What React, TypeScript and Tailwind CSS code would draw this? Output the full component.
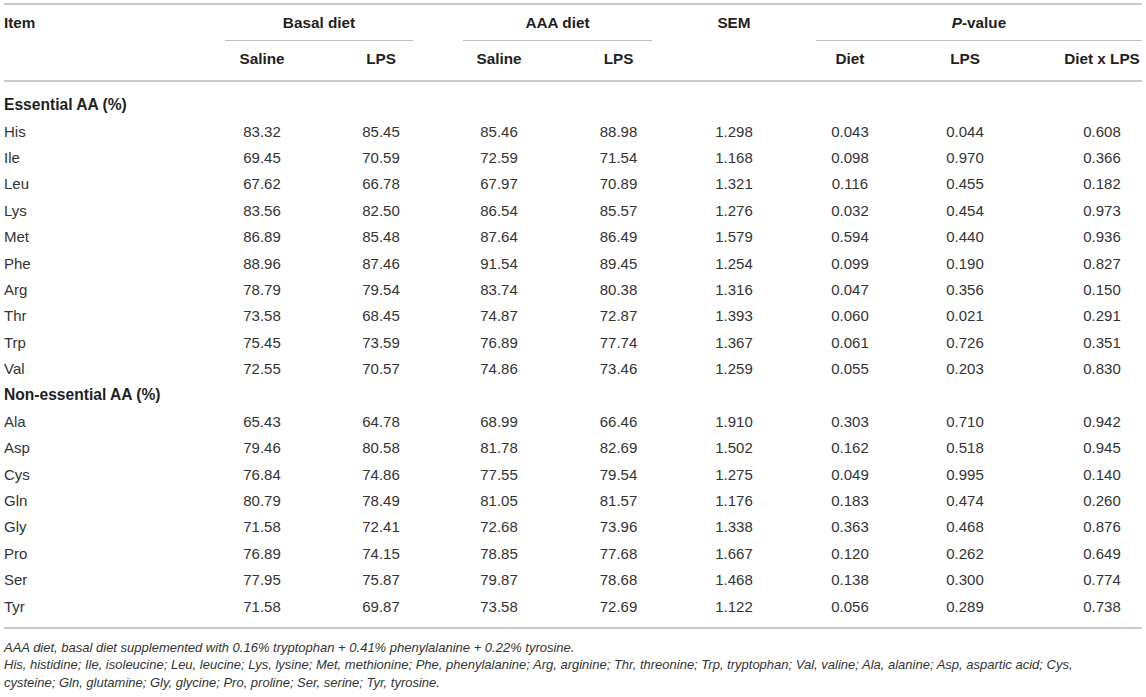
const essential = [
  ["His", "83.32", "85.45", "85.46", "88.98", "1.298", "0.043", "0.044", "0.608"],
  ["Ile", "69.45", "70.59", "72.59", "71.54", "1.168", "0.098", "0.970", "0.366"],
  ["Leu", "67.62", "66.78", "67.97", "70.89", "1.321", "0.116", "0.455", "0.182"],
  ["Lys", "83.56", "82.50", "86.54", "85.57", "1.276", "0.032", "0.454", "0.973"],
  ["Met", "86.89", "85.48", "87.64", "86.49", "1.579", "0.594", "0.440", "0.936"],
  ["Phe", "88.96", "87.46", "91.54", "89.45", "1.254", "0.099", "0.190", "0.827"],
  ["Arg", "78.79", "79.54", "83.74", "80.38", "1.316", "0.047", "0.356", "0.150"],
  ["Thr", "73.58", "68.45", "74.87", "72.87", "1.393", "0.060", "0.021", "0.291"],
  ["Trp", "75.45", "73.59", "76.89", "77.74", "1.367", "0.061", "0.726", "0.351"],
  ["Val", "72.55", "70.57", "74.86", "73.46", "1.259", "0.055", "0.203", "0.830"],
];

const nonEssential = [
  ["Ala", "65.43", "64.78", "68.99", "66.46", "1.910", "0.303", "0.710", "0.942"],
  ["Asp", "79.46", "80.58", "81.78", "82.69", "1.502", "0.162", "0.518", "0.945"],
  ["Cys", "76.84", "74.86", "77.55", "79.54", "1.275", "0.049", "0.995", "0.140"],
  ["Gln", "80.79", "78.49", "81.05", "81.57", "1.176", "0.183", "0.474", "0.260"],
  ["Gly", "71.58", "72.41", "72.68", "73.96", "1.338", "0.363", "0.468", "0.876"],
  ["Pro", "76.89", "74.15", "78.85", "77.68", "1.667", "0.120", "0.262", "0.649"],
  ["Ser", "77.95", "75.87", "79.87", "78.68", "1.468", "0.138", "0.300", "0.774"],
  ["Tyr", "71.58", "69.87", "73.58", "72.69", "1.122", "0.056", "0.289", "0.738"],
];

const cols = "grid grid-cols-[196px_124px_114px_122px_117px_114px_118px_112px_121px]";

function DataRow({ row }: { row: string[] }) {
  return (
    <div className={`${cols} h-[26.4px] items-center`}>
      {row.map((v, i) => (
        <div
          key={i}
          className={i === 0 ? "text-left" : i === 8 ? "text-center pl-[41px]" : "text-center"}
        >
          {v}
        </div>
      ))}
    </div>
  );
}

function Section({ title }: { title: string }) {
  return (
    <div className="h-[26.4px] flex items-center font-bold text-[15.6px] text-[#1f1f1f]">{title}</div>
  );
}

export default function App() {
  return (
    <div
      className="w-[1146px] h-[697px] bg-white overflow-hidden pt-[3px] px-[4px] text-[15px] leading-[18px] text-[#333]"
      style={{ fontFamily: '"Liberation Sans", Arial, sans-serif' }}
    >
      <div className="w-[1138px]">
        <div className="h-[2px] bg-[#c9c9c9]" />

        {/* header row 1 */}
        <div className={`${cols} h-[36px] font-bold text-[15.3px] text-[#1f1f1f]`}>
          <div className="pt-[9px]">Item</div>
          <div className="col-span-2 px-[25px]">
            <div className="h-full pt-[9px] text-center border-b border-[#bdbdbd]">Basal diet</div>
          </div>
          <div className="col-span-2 px-[25px]">
            <div className="h-full pt-[9px] text-center border-b border-[#bdbdbd]">AAA diet</div>
          </div>
          <div className="pt-[9px] text-center">SEM</div>
          <div className="col-span-3 pl-[25px]">
            <div className="h-full pt-[9px] text-center border-b border-[#bdbdbd]">
              <span className="italic">P</span>-value
            </div>
          </div>
        </div>

        {/* header row 2 */}
        <div className={`${cols} h-[39px] pt-[9px] font-bold text-[15.3px] text-[#1f1f1f]`}>
          <div />
          <div className="text-center">Saline</div>
          <div className="text-center">LPS</div>
          <div className="text-center">Saline</div>
          <div className="text-center">LPS</div>
          <div />
          <div className="text-center">Diet</div>
          <div className="text-center">LPS</div>
          <div className="text-center pl-[41px]">Diet x LPS</div>
        </div>
        <div className="h-[2px] bg-[#c9c9c9]" />

        <div className="pt-[10px] pb-[7px]">
          <Section title="Essential AA (%)" />
          {essential.map((r) => (
            <DataRow key={r[0]} row={r} />
          ))}
          <Section title="Non-essential AA (%)" />
          {nonEssential.map((r) => (
            <DataRow key={r[0]} row={r} />
          ))}
        </div>
        <div className="h-[2px] bg-[#c9c9c9]" />

        <div className="pt-[10px] text-[13px] leading-[17.5px] italic text-[#333]">
          <div>AAA diet, basal diet supplemented with 0.16% tryptophan + 0.41% phenylalanine + 0.22% tyrosine.</div>
          <div>
            His, histidine; Ile, isoleucine; Leu, leucine; Lys, lysine; Met, methionine; Phe, phenylalanine; Arg, arginine; Thr, threonine; Trp, tryptophan; Val, valine; Ala, alanine; Asp, aspartic acid; Cys,
          </div>
          <div>cysteine; Gln, glutamine; Gly, glycine; Pro, proline; Ser, serine; Tyr, tyrosine.</div>
        </div>
      </div>
    </div>
  );
}
